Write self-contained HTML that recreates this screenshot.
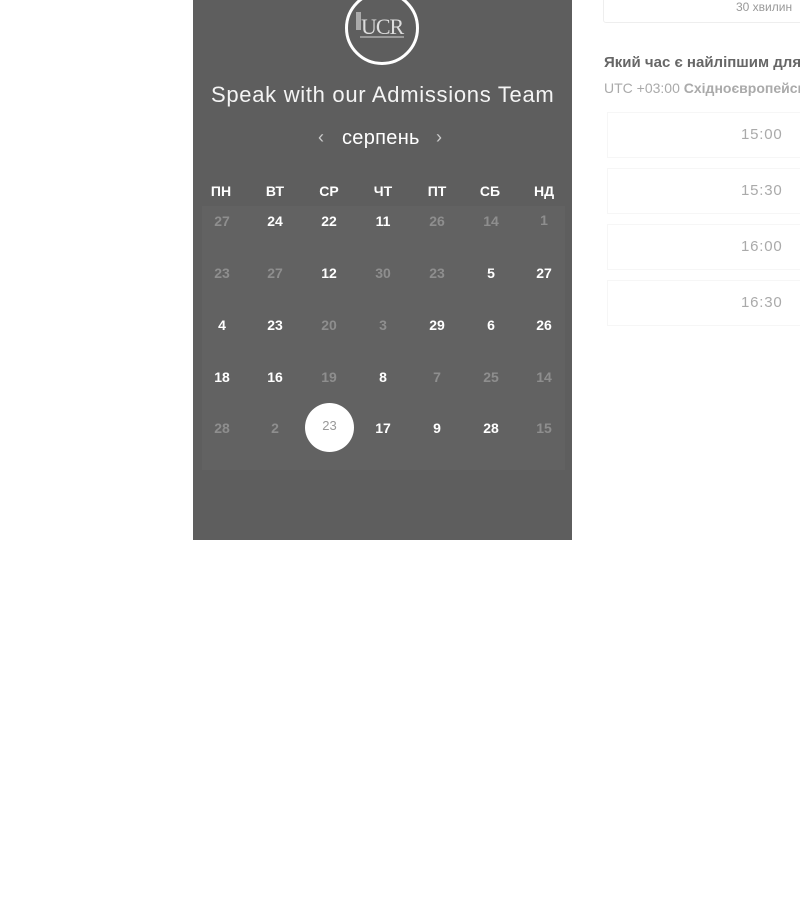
<!DOCTYPE html>
<html><head><meta charset="utf-8"><style>
*{margin:0;padding:0;box-sizing:border-box}
body{width:800px;height:900px;background:#fff;position:relative;overflow:hidden;font-family:"Liberation Sans",sans-serif}
.panel{position:absolute;left:193px;top:0;width:379px;height:540px;background:#5e5e5e}
.inner{position:absolute;left:202px;top:206px;width:363px;height:264px;background:#626262}
.logo{position:absolute;left:345px;top:-9px;width:74px;height:74px;border:3px solid #fff;border-radius:50%}
.logo span{position:absolute;left:13px;top:20px;font-family:"Liberation Serif",serif;font-size:22px;color:#ddd;letter-spacing:-1px}
.logo i{position:absolute;left:8px;top:18px;width:5px;height:18px;background:#aaa}
.logo b{position:absolute;left:12px;top:42px;width:44px;height:2px;background:#999}
.t{position:absolute;color:#fff;white-space:nowrap}
.c{position:absolute;width:40px;margin-left:-20px;text-align:center;font-size:14px;font-weight:bold;color:#fff}
.c.d{color:#8e8e8e}
.h{position:absolute;width:40px;margin-left:-20px;text-align:center;font-size:14px;font-weight:bold;color:#fff}
.sel{position:absolute;left:305px;top:403px;width:49px;height:49px;border-radius:50%;background:#fff;color:#999;font-size:13px;text-align:center;line-height:46px}
.slot{position:absolute;left:607px;width:200px;height:46px;border:1px solid #f6f6f6;border-right:none;font-size:15px;color:#aaa;line-height:44px;padding-left:133px;text-align:left;letter-spacing:0.8px}
</style></head><body>
<div class="panel"></div>
<div class="inner"></div>
<div class="logo"><i></i><span>UCR</span><b></b></div>
<div class="t" style="left:211px;top:82px;font-size:22px;color:#f4f4f4;letter-spacing:0.7px">Speak with our Admissions Team</div>
<div class="t" style="left:318px;top:127px;font-size:18px;color:#ccc">‹</div>
<div class="t" style="left:342px;top:127px;font-size:20px;letter-spacing:0.3px">серпень</div>
<div class="t" style="left:436px;top:127px;font-size:18px;color:#ccc">›</div>
<div class="h" style="left:221px;top:183px">ПН</div>
<div class="h" style="left:275px;top:183px">ВТ</div>
<div class="h" style="left:329px;top:183px">СР</div>
<div class="h" style="left:383px;top:183px">ЧТ</div>
<div class="h" style="left:437px;top:183px">ПТ</div>
<div class="h" style="left:490px;top:183px">СБ</div>
<div class="h" style="left:544px;top:183px">НД</div>

<div class="c d" style="left:222px;top:213px">27</div><div class="c" style="left:275px;top:213px">24</div><div class="c" style="left:329px;top:213px">22</div><div class="c" style="left:383px;top:213px">11</div><div class="c d" style="left:437px;top:213px">26</div><div class="c d" style="left:491px;top:213px">14</div><div class="c d" style="left:544px;top:212px">1</div>
<div class="c d" style="left:222px;top:265px">23</div><div class="c d" style="left:275px;top:265px">27</div><div class="c" style="left:329px;top:265px">12</div><div class="c d" style="left:383px;top:265px">30</div><div class="c d" style="left:437px;top:265px">23</div><div class="c" style="left:491px;top:265px">5</div><div class="c" style="left:544px;top:265px">27</div>
<div class="c" style="left:222px;top:317px">4</div><div class="c" style="left:275px;top:317px">23</div><div class="c d" style="left:329px;top:317px">20</div><div class="c d" style="left:383px;top:317px">3</div><div class="c" style="left:437px;top:317px">29</div><div class="c" style="left:491px;top:317px">6</div><div class="c" style="left:544px;top:317px">26</div>
<div class="c" style="left:222px;top:369px">18</div><div class="c" style="left:275px;top:369px">16</div><div class="c d" style="left:329px;top:369px">19</div><div class="c" style="left:383px;top:369px">8</div><div class="c d" style="left:437px;top:369px">7</div><div class="c d" style="left:491px;top:369px">25</div><div class="c d" style="left:544px;top:369px">14</div>
<div class="c d" style="left:222px;top:420px">28</div><div class="c d" style="left:275px;top:420px">2</div><div class="sel">23</div><div class="c" style="left:383px;top:420px">17</div><div class="c" style="left:437px;top:420px">9</div><div class="c" style="left:491px;top:420px">28</div><div class="c d" style="left:544px;top:420px">15</div>

<div style="position:absolute;left:603px;top:-10px;width:210px;height:33px;border:1px solid #eee;border-radius:3px"></div>
<div class="t" style="left:736px;top:0px;font-size:12px;color:#999">30 хвилин</div>
<div class="t" style="left:604px;top:54px;font-size:15px;font-weight:bold;color:#666">Який час є найліпшим для</div>
<div class="t" style="left:604px;top:80px;font-size:14px;color:#aaa">UTC +03:00 <b>Східноєвропейсь</b></div>
<div class="slot" style="top:112px">15:00</div>
<div class="slot" style="top:168px">15:30</div>
<div class="slot" style="top:224px">16:00</div>
<div class="slot" style="top:280px">16:30</div>
</body></html>
